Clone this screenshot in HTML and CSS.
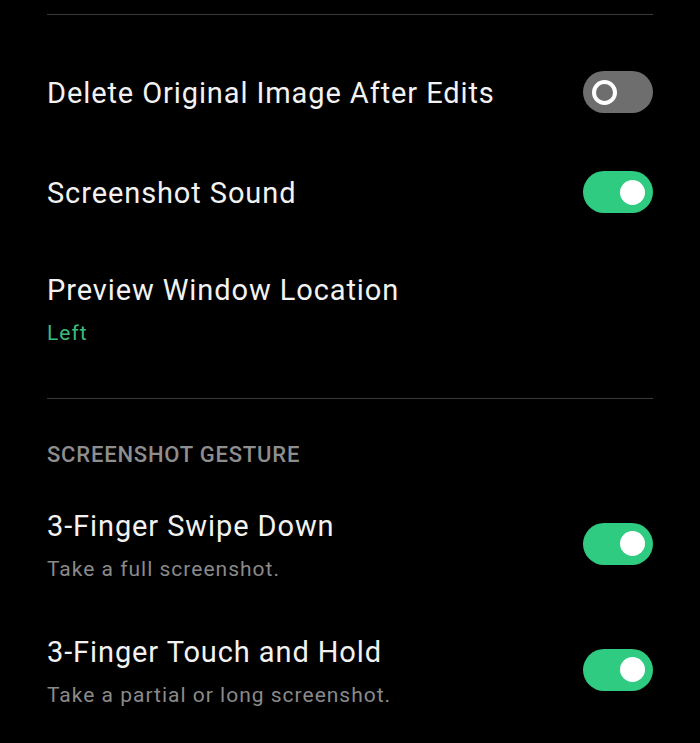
FILE: index.html
```html
<!DOCTYPE html>
<html lang="en">
<head>
    <meta charset="UTF-8">
    <meta name="viewport" content="width=device-width, initial-scale=1.0">
    <title>Screenshot Settings</title>
    <link rel="stylesheet" href="styles.css">
</head>
<body>

<div class="settings">
    <div class="divider top"></div>

    <div class="row single">
        <div class="title">Delete Original Image After Edits</div>
        <span class="switch off"><span class="knob"></span></span>
    </div>

    <div class="row single">
        <div class="title">Screenshot Sound</div>
        <span class="switch on"><span class="knob"></span></span>
    </div>

    <div class="row double last">
        <div class="text">
            <div class="title">Preview Window Location</div>
            <div class="value">Left</div>
        </div>
    </div>

    <div class="divider"></div>

    <div class="section-label">SCREENSHOT GESTURE</div>

    <div class="row double">
        <div class="text">
            <div class="title">3-Finger Swipe Down</div>
            <div class="summary">Take a full screenshot.</div>
        </div>
        <span class="switch on"><span class="knob"></span></span>
    </div>

    <div class="row double">
        <div class="text">
            <div class="title">3-Finger Touch and Hold</div>
            <div class="summary">Take a partial or long screenshot.</div>
        </div>
        <span class="switch on"><span class="knob"></span></span>
    </div>
</div>

</body>
</html>
```

FILE: styles.css
```css
body {
    margin: 0;
    background-color: #000;
    font-family: Roboto, "Noto Sans", Arial, sans-serif;
    color: #f2f2f2;
}
.settings {
    padding: 0 47px;
}
.divider {
    height: 1px;
    background-color: #3a3a3a;
}
.divider.top {
    margin-top: 14px;
    margin-bottom: 27px;
}
.row {
    display: flex;
    align-items: center;
    justify-content: space-between;
}
.row.single {
    height: 100px;
}
.row.double {
    padding: 24px 0 25px;
}
.row.double .switch {
    margin-bottom: 4px;
}
.row.last {
    padding: 29px 0 50px;
}
.title {
    font-size: 29px;
    line-height: 36px;
    letter-spacing: 0.9px;
    padding-top: 1px;
}
.value,
.summary {
    font-size: 21px;
    line-height: 30px;
    letter-spacing: 1px;
    margin-top: 10px;
}
.value {
    color: #3dba7c;
}
.summary {
    color: #8a8a8a;
}
.section-label {
    font-size: 22px;
    line-height: 30px;
    font-weight: 500;
    letter-spacing: 0.8px;
    color: #8e8e8e;
    margin-top: 41px;
    margin-bottom: 13px;
}
.switch {
    position: relative;
    flex: none;
    width: 70px;
    height: 42px;
    border-radius: 21px;
}
.switch.on {
    background-color: #2ecb80;
}
.switch.off {
    background-color: #6e6e6e;
}
.knob {
    position: absolute;
    top: 8.5px;
    width: 25px;
    height: 25px;
    border-radius: 50%;
    box-sizing: border-box;
}
.switch.on .knob {
    right: 8.5px;
    background-color: #fff;
}
.switch.off .knob {
    left: 8.5px;
    border: 4px solid #fff;
}
```
